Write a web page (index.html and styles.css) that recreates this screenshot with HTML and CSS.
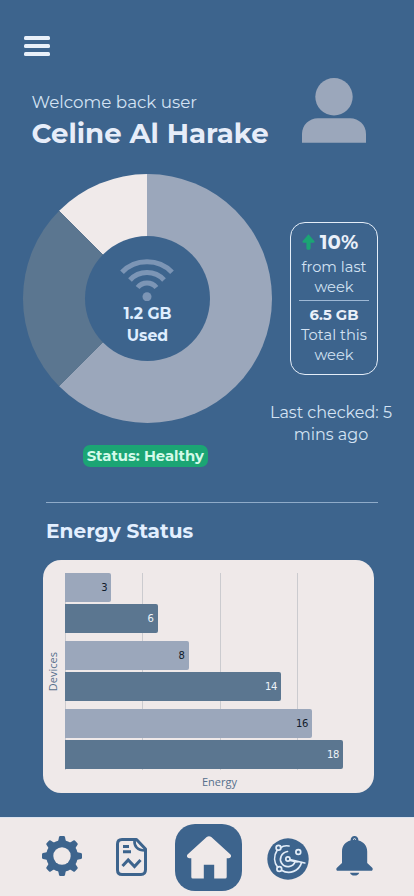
FILE: index.html
```html
<!DOCTYPE html>
<html lang="en">
<head>
<meta charset="utf-8">
<meta name="viewport" content="width=device-width, initial-scale=1">
<title>Usage dashboard</title>
<link rel="stylesheet" href="styles.css">
</head>
<body>
<main class="app">
  <div class="menu"><i></i><i></i><i></i></div>
  <header class="header">
    <div>
      <p class="welcome"><span>Welcome back user</span></p>
      <h1 class="name"><span>Celine Al Harake</span></h1>
    </div>
    <svg class="avatar" viewBox="0 0 64 65"><circle cx="32" cy="18.800" r="18.700"/><path d="M0 64.700V56C0 47 7 40.200 16 40.200H48C57 40.200 64 47 64 56V64.700Z"/></svg>
  </header>
  <section class="usage">
    <div class="network">
      <div class="donut">
        <div class="hole">
          <svg class="wifi" viewBox="0 0 54 42" fill="none"><g stroke="#7c95b5" stroke-width="5"><path d="M2 13.300C15 -.8 39 -.8 52 13.300"/><path d="M10 21C19 11 35 11 44 21"/><path d="M17.600 28.500C22.500 22.500 31.500 22.500 36.400 28.500"/></g><circle cx="27" cy="37.800" r="4.500" fill="#7c95b5"/></svg>
          <p class="used"><span>1.2 GB</span><br><span>Used</span></p>
        </div>
      </div>
      <div class="badge"><span>Status: Healthy</span></div>
    </div>
    <aside class="side">
      <div class="stats">
        <div class="percent"><svg width="13" height="16" viewBox="0 0 13 16"><path fill="#1ba574" d="M6.500 0.300L12.500 7.200Q13 8.800 11.200 8.800H8.600V14.300Q8.600 15.700 7.400 15.700H5.600Q4.400 15.700 4.400 14.300V8.800H1.800Q0 8.800 .5 7.200Z"/></svg><b>10%</b></div>
        <p class="stat-text"><span>from last</span><br><span>week</span></p>
        <hr>
        <p class="total">6.5 GB</p>
        <p class="stat-text"><span>Total this</span><br><span>week</span></p>
      </div>
      <p class="checked"><span>Last checked: 5</span><br><span>mins ago</span></p>
    </aside>
  </section>
  <section class="energy">
    <h2><span>Energy Status</span></h2>
    <div class="chart">
      <div class="ylabel"><span>Devices</span></div>
      <div class="plot">
        <div class="pair"><div class="bar light" style="width:46.300px">3</div><div class="bar dark" style="width:92.600px">6</div></div>
        <div class="pair"><div class="bar light" style="width:123.500px">8</div><div class="bar dark" style="width:216.200px">14</div></div>
        <div class="pair"><div class="bar light" style="width:247px">16</div><div class="bar dark" style="width:278px">18</div></div>
      </div>
      <div class="xlabel"><span>Energy</span></div>
    </div>
  </section>
  <nav class="nav">
    <svg class="gear" viewBox="-20 -20 40 40"><g fill="#3d648d"><circle r="15.800"/><path id="tooth" d="M-4 -14L-3 -19Q-2.700 -20 -1.800 -20H1.800Q2.700 -20 3 -19L4 -14V14L3 19Q2.700 20 1.800 20H-1.800Q-2.700 20 -3 19L-4 14Z"/><use href="#tooth" transform="rotate(45)"/><use href="#tooth" transform="rotate(90)"/><use href="#tooth" transform="rotate(135)"/></g><circle r="8.700" fill="#efe9e9"/></svg>
    <svg class="report" viewBox="0 0 31 38" fill="none" stroke="#3d648d" stroke-width="3"><path d="M6 1.500H20.500L29.500 11V31.500Q29.500 36.500 25 36.500H6Q1.500 36.500 1.500 32V6Q1.500 1.500 6 1.500Z" stroke-linejoin="round"/><path d="M18.500 2C18 8.500 21.500 12.500 29 12.500" stroke-width="2.600"/><path d="M7 8.500H13M7 13.800H15M6.500 28L12.200 22L18.500 28.500L24.500 22"/></svg>
    <div class="home"><svg viewBox="0 0 46 44"><path fill="#efe9e9" d="M20.700 1Q23 -.5 25.300 1L44.500 18.600Q45.700 20.200 44.400 21.600Q43.700 22.300 42.500 22.300H40.700V41Q40.700 42.600 39.100 42.600H28.200V28.800H17.800V42.600H6.900Q5.300 42.600 5.300 41V22.300H3.500Q2.300 22.300 1.600 21.600Q.3 20.200 1.500 18.600Z"/></svg></div>
    <svg class="radar" viewBox="0 0 42 42"><circle cx="21" cy="21" r="20.700" fill="#3d648d"/><g fill="none" stroke="#e3edf8" stroke-width="1.700" stroke-linecap="round"><path d="M22 8Q17 7 13.400 9.800M10 12.500C6.500 18 7 24.500 10.700 29.200M14.500 32.200C22.500 37 32 33 34.500 24.700"/><path d="M20.500 13.500C14 14.800 12 21 14.500 25C18 30.500 26 29.500 28.200 23.500"/><path d="M23 21.600L37.800 25M23 22.500L30 24"/><circle cx="11.500" cy="9.800" r="2.400"/><circle cx="12.300" cy="31" r="2.400"/><circle cx="31.300" cy="14" r="2.400"/><circle cx="20.900" cy="21" r="2.100"/></g></svg>
    <svg class="bell" viewBox="0 0 37 40"><path fill="#3d648d" d="M1 34.800Q-.5 33 1.200 31.500L6 27V15.500C6 9.500 9.500 5.700 14.500 4.500Q14.800 0 18.500 0T22.500 4.500C27.500 5.700 31.200 9.500 31.200 15.500V27L36 31.500Q37.500 33 36 34.800Z"/><path d="M17 3.600Q18.500 1.600 20 3.600" fill="none" stroke="#efe9e9" stroke-width="1"/><path fill="#3d648d" d="M14 36.800H23.200Q22.500 39.600 18.600 39.600T14 36.800Z"/></svg>
  </nav>
</main>
</body>
</html>
```
FILE: styles.css
```css
* { box-sizing: border-box; margin: 0; padding: 0; }
body { background: #3d648d; color: #eaf0f9; font-family: Montserrat, Inter, sans-serif; }
.app { width: 414px; height: 896px; display: flex; flex-direction: column; overflow: hidden; }
.app span, .app b { white-space: nowrap; }
svg { display: block; flex: none; }
.menu { margin: 36px 0 0 24px; width: 26px; height: 20px; display: flex; flex-direction: column; justify-content: space-between; }
.menu i { height: 4px; border-radius: 1.500px; background: #e9f0f9; }
.header { height: 118px; padding: 22px 48px 0 31.500px; display: flex; justify-content: space-between; }
.welcome { margin-top: 14px; font-size: 16.750px; line-height: 20px; font-weight: 400; color: #d3e2f3; }
.name { margin-top: 4px; font-size: 27.600px; line-height: 34px; font-weight: 700; color: #e7edf9; }
.avatar { width: 64px; height: 65px; fill: #9ba7bb; }
.usage { height: 328px; display: flex; }
.network { width: 270px; padding-left: 22.800px; display: flex; flex-direction: column; align-items: flex-start; }
.donut { width: 249.400px; height: 249.400px; flex: none; border-radius: 50%; display: grid; place-items: center; background: conic-gradient(#9ba7bb 0 62.500%, #5b7690 62.500% 87.500%, #f0eaea 87.500%); }
.hole { width: 125px; height: 125px; border-radius: 50%; background: #3d648d; display: flex; flex-direction: column; align-items: center; padding-top: 23px; }
.wifi { width: 54px; height: 42px; }
.used { text-align: center; font-size: 15.700px; line-height: 22px; font-weight: 700; margin-top: 2px; color: #dfeeff; }
.badge { width: 125px; height: 22px; margin: 21.500px 0 0 60px; border-radius: 7px; background: #1ba574; text-align: center; font-size: 14.800px; line-height: 22px; font-weight: 700; color: #d3fae9; }
.side { flex: 1; padding-top: 48px; }
.stats { width: 88px; height: 153px; margin-left: 20px; border: 1.300px solid #e4edf8; border-radius: 15px; padding: 6.500px 7px 0; text-align: center; }
.percent { display: flex; justify-content: center; align-items: center; gap: 5px; height: 24px; margin: 0 7px 0 -1px; }
.percent b { font-size: 19.700px; line-height: 24px; }
.stat-text { font-size: 14.700px; line-height: 20px; font-weight: 400; color: #d3e2f3; margin: 3px -4px 0; }
.stats hr { border: 0; height: 1px; background: #9eb8d5; margin: 3px 1px 5px; }
.total { font-weight: 700; font-size: 14.700px; line-height: 19px; }
.total + .stat-text { margin-top: 0; }
.checked { text-align: center; margin: 26.500px 0 0; padding-right: 22px; font-size: 16px; line-height: 22px; font-weight: 400; color: #d3e2f3; }
.energy { height: 315px; margin: 0 36px 0 46px; border-top: 1px solid #8fabc9; }
.energy h2 { margin-top: 15px; font-size: 20.100px; line-height: 26px; color: #e3efff; }
.chart { width: 331px; height: 233px; margin: 15.500px 0 0 -3px; border-radius: 18px; background: #efe9e9; display: grid; grid-template-columns: 22px 278px; grid-template-rows: 210px 23px; font-family: "Open Sans", sans-serif; color: #566f8c; font-size: 11px; }
.ylabel { display: grid; place-items: center; padding: 14px 3px 0 0; }
.ylabel span { writing-mode: vertical-rl; transform: rotate(180deg); }
.plot { padding-top: 13px; display: flex; flex-direction: column; justify-content: space-between; background: repeating-linear-gradient(90deg, #cbcbcf 0 1px, transparent 1px 77.300px) 0 13px / 278px 197px no-repeat; }
.pair { height: 60.800px; display: flex; flex-direction: column; justify-content: space-between; }
.bar { height: 29.200px; border-radius: 0 2px 2px 0; text-align: right; padding-right: 4px; line-height: 29px; font-family: "DejaVu Sans", sans-serif; font-size: 10px; letter-spacing: -.3px; }
.light { background: #9ba7bb; color: #111c2b; }
.dark { background: #5b7690; color: #edf3f8; }
.xlabel { grid-column: 2; text-align: center; line-height: 23px; padding-left: 31px; }
.nav { height: 79px; background: #efe9e9; border-top: 1px solid #dce3ef; display: flex; align-items: flex-start; }
.gear { width: 40px; height: 40px; margin: 18px 0 0 42px; }
.report { width: 31px; height: 38px; margin: 20px 0 0 34px; }
.home { width: 67px; height: 67px; margin: 6px 0 0 28px; border-radius: 20px; background: #3d648d; display: grid; place-items: center; }
.home svg { width: 46px; height: 44px; }
.radar { width: 42px; height: 42px; margin: 20px 0 0 25px; }
.bell { width: 37px; height: 40px; margin: 18px 0 0 27px; }
```
